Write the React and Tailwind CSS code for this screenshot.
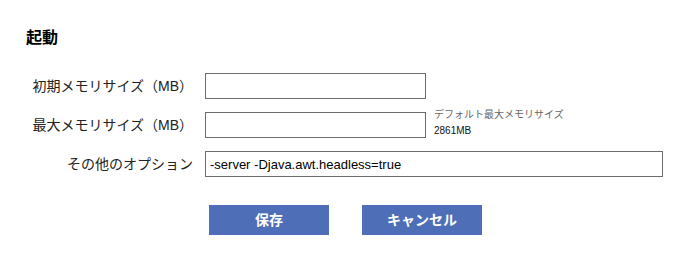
export default function App() {
  const font = { fontFamily: '"Liberation Sans", "Noto Sans CJK JP", sans-serif' };
  return (
    <div className="w-[690px] h-[263px] bg-white text-[#222]" style={font}>
      <div className="pt-[27px] pl-[26px]">
        <h2 className="text-[16px] font-bold leading-[22px] text-black">起動</h2>
      </div>
      <div className="mt-[24px] flex flex-col gap-[12px]">
        <div className="flex items-center">
          <label className="w-[195px] text-right text-[14px] pr-[2px]">初期メモリサイズ（MB）</label>
          <input className="ml-[10px] w-[221px] h-[26px] border border-[#6b6b6b] outline-none px-[4px] text-[13px]" />
        </div>
        <div className="flex items-center">
          <label className="w-[195px] text-right text-[14px] pr-[2px]">最大メモリサイズ（MB）</label>
          <input className="ml-[10px] w-[221px] h-[26px] border border-[#6b6b6b] outline-none px-[4px] text-[13px]" />
          <div className="ml-[8px] flex flex-col text-[10px] leading-[16px] -mt-[4px]">
            <span className="text-[#666]">デフォルト最大メモリサイズ</span>
            <span className="text-[#111]">2861MB</span>
          </div>
        </div>
        <div className="flex items-center">
          <label className="w-[195px] text-right text-[14px] pr-[2px]">その他のオプション</label>
          <input
            defaultValue="-server -Djava.awt.headless=true"
            className="ml-[10px] w-[458px] h-[26px] border border-[#6b6b6b] outline-none px-[4px] text-[13px] text-black"
            style={font}
          />
        </div>
      </div>
      <div className="mt-[28px] flex pl-[209px] gap-[33px]">
        <button className="w-[120px] h-[30px] bg-[#4e6eb7] text-white font-bold text-[14px]">保存</button>
        <button className="w-[120px] h-[30px] bg-[#4e6eb7] text-white font-bold text-[14px]">キャンセル</button>
      </div>
    </div>
  );
}
